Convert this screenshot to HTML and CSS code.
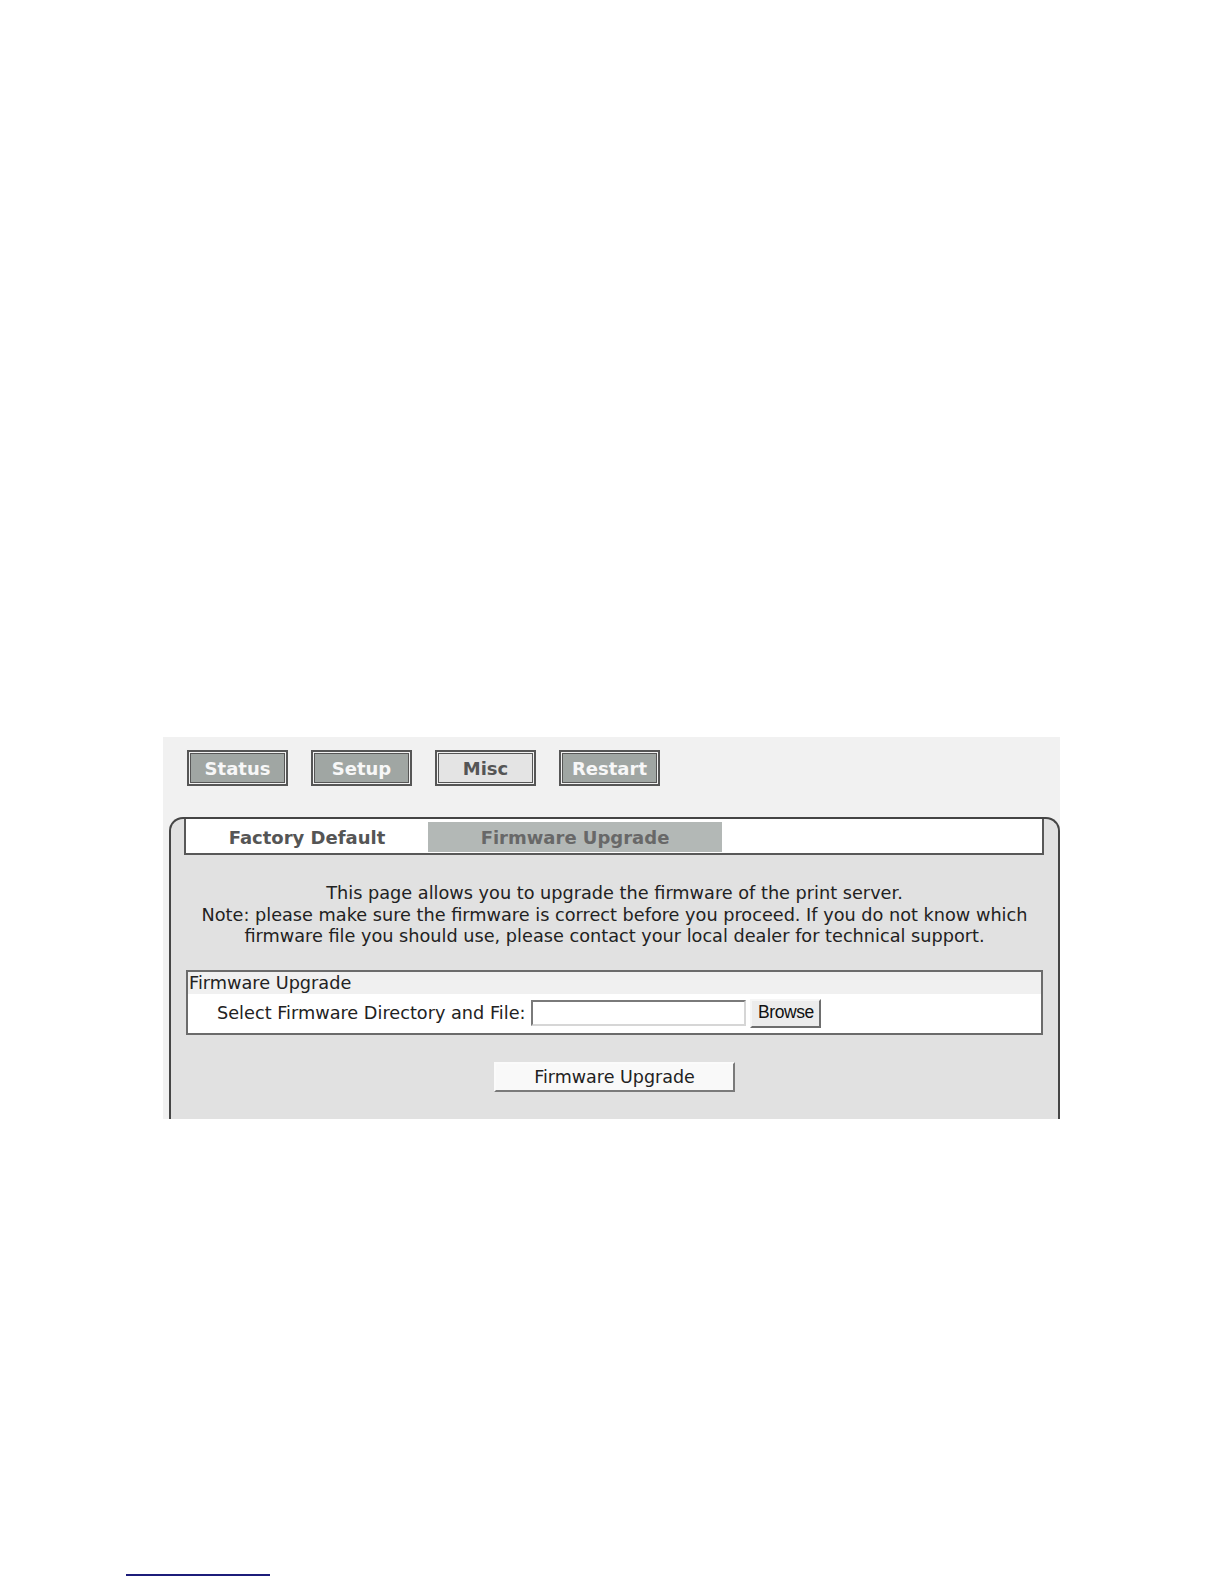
FILE: index.html
```html
<!DOCTYPE html>
<html lang="en">
<head>
<meta charset="utf-8">
<title>Firmware Upgrade</title>
<link rel="stylesheet" href="styles.css">
</head>
<body>
<div class="shot">
  <div class="nav">
    <div class="nav-btn">Status</div>
    <div class="nav-btn">Setup</div>
    <div class="nav-btn nav-btn-active">Misc</div>
    <div class="nav-btn">Restart</div>
  </div>
  <div class="panel">
    <div class="tabs">
      <div class="tab tab-factory">Factory Default</div>
      <div class="tab tab-fw">Firmware Upgrade</div>
    </div>
    <div class="desc">
      This page allows you to upgrade the firmware of the print server.<br>
      Note: please make sure the firmware is correct before you proceed. If you do not know which<br>
      firmware file you should use, please contact your local dealer for technical support.
    </div>
    <div class="fieldset">
      <div class="fs-head">Firmware Upgrade</div>
      <div class="fs-row">
        <span class="fs-label">Select Firmware Directory and File:</span>
        <input class="file-input" type="text" value="">
        <button class="browse" type="button">Browse</button>
      </div>
    </div>
    <div class="submit-wrap">
      <button class="submit" type="button">Firmware Upgrade</button>
    </div>
  </div>
</div>
<div class="footer-line"></div>
</body>
</html>
```

FILE: styles.css
```css
html, body {
  margin: 0;
  padding: 0;
  background: #ffffff;
}

body {
  font-family: "DejaVu Sans", Verdana, sans-serif;
  color: #222222;
}

.shot {
  margin: 737px 0 0 163px;
  width: 897px;
  height: 382px;
  background: #f1f1f1;
  overflow: hidden;
}

.nav {
  display: flex;
  gap: 23px;
  padding: 13px 0 0 24px;
  height: 36px;
}

.nav-btn {
  width: 101px;
  height: 36px;
  box-sizing: border-box;
  border: 2px solid #565656;
  box-shadow: inset 0 0 0 1px #f2f2f2, inset 0 0 0 2px #565656;
  background: #a0a6a3;
  color: #f7f7f7;
  font-weight: bold;
  font-size: 18px;
  display: flex;
  align-items: center;
  justify-content: center;
}

.nav-btn-active {
  background: #e4e4e4;
  color: #555555;
}

.panel {
  margin: 31px 0 0 6px;
  width: 891px;
  height: 420px;
  box-sizing: border-box;
  border: 2px solid #454545;
  border-bottom: none;
  border-radius: 14px 14px 0 0;
  background: #e1e1e1;
}

.tabs {
  margin: 0 14px 0 13px;
  height: 36px;
  box-sizing: border-box;
  background: #ffffff;
  border: 2px solid #585858;
  border-top: none;
  padding: 3px 0 1px;
  display: flex;
}

.tab {
  font-weight: bold;
  font-size: 18px;
  color: #555555;
  display: flex;
  align-items: center;
  justify-content: center;
}

.tab-factory {
  width: 242px;
}

.tab-fw {
  width: 294px;
  background: #b3b8b6;
  color: #686868;
}

.desc {
  margin-top: 28px;
  text-align: center;
  font-size: 17.7px;
  line-height: 21.5px;
  color: #222222;
}

.fieldset {
  margin: 22px 15px 0;
  border: 2px solid #6b6b6b;
  background: #ffffff;
}

.fs-head {
  height: 22px;
  line-height: 22px;
  background: #f0f0f0;
  padding-left: 1px;
  font-size: 17.7px;
  color: #222222;
}

.fs-row {
  display: flex;
  align-items: center;
  height: 39px;
  padding-left: 29px;
  font-size: 17.7px;
  color: #222222;
}

.file-input {
  margin: 0 0 0 6px;
  width: 215px;
  height: 26px;
  box-sizing: border-box;
  border: 2px solid;
  border-color: #7a7a7a #d6d6d6 #d6d6d6 #7a7a7a;
  background: #ffffff;
  padding: 0;
}

.browse {
  margin: 0 0 0 4px;
  width: 71px;
  height: 29px;
  box-sizing: border-box;
  border: 2px solid;
  border-color: #f6f6f6 #6e6e6e #6e6e6e #f6f6f6;
  background: #ececec;
  font-family: "Liberation Sans", Arial, sans-serif;
  font-size: 17.5px;
  letter-spacing: -0.4px;
  color: #111111;
  padding: 0 0 3px;
  line-height: 22px;
}

.submit-wrap {
  display: flex;
  justify-content: center;
  margin-top: 27px;
}

.submit {
  margin: 0;
  width: 241px;
  height: 30px;
  box-sizing: border-box;
  border: 2px solid;
  border-color: #fbfbfb #7a7a7a #7a7a7a #fbfbfb;
  background: #f9f9f9;
  font-family: "DejaVu Sans", Verdana, sans-serif;
  font-size: 17.5px;
  color: #222222;
  padding: 0;
}

.footer-line {
  margin: 455px 0 0 126px;
  width: 144px;
  height: 2px;
  background: #1c1c7a;
}
```
